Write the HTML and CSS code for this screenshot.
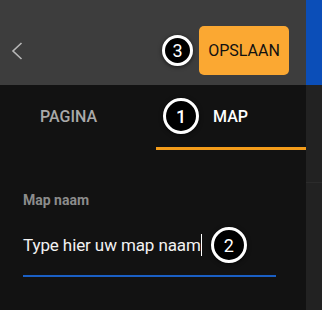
FILE: index.html
```html
<!DOCTYPE html>
<html lang="nl">
<head>
  <meta charset="UTF-8">
  <title>Map opslaan</title>
  <link rel="stylesheet" href="styles.css">
</head>
<body>
<div class="app">
  <div class="main">
    <div class="toolbar">
      <button class="back-button" aria-label="Terug">
        <svg width="12" height="18" viewBox="0 0 12 18">
          <polyline points="10.5,1 2,9 10.5,17" fill="none" stroke="#b8b8b8" stroke-width="1.6"/>
        </svg>
      </button>
      <div class="toolbar-right">
        <span class="step">3</span>
        <button class="save-button">OPSLAAN</button>
      </div>
    </div>

    <div class="tabs">
      <div class="tab tab-page">PAGINA</div>
      <div class="tab tab-map active">
        <span class="step">1</span>
        <span>MAP</span>
      </div>
    </div>

    <div class="form">
      <label class="field-label">Map naam</label>
      <div class="field">
        <span class="field-text">Type hier uw map naam</span><span class="caret"></span>
        <span class="step">2</span>
      </div>
    </div>
  </div>

  <div class="side">
    <div class="side-top"></div>
    <div class="side-mid"></div>
    <div class="side-bottom"></div>
  </div>
</div>
</body>
</html>
```

FILE: styles.css
```css
html, body {
  height: 100%;
  margin: 0;
  background-color: #121212;
  font-family: Roboto, "Liberation Sans", sans-serif;
}

.app {
  display: flex;
  height: 100%;
}

.main {
  width: 306px;
  display: flex;
  flex-direction: column;
  background-color: #121212;
}

/* top bar with back arrow and save button */
.toolbar {
  height: 85px;
  box-sizing: border-box;
  padding: 26px 17px 10px 11px;
  display: flex;
  align-items: center;
  justify-content: space-between;
  background-color: #3d3d3d;
}

.back-button {
  border: none;
  background: none;
  padding: 0;
  width: 12px;
  height: 18px;
  display: flex;
}

.toolbar-right {
  display: flex;
  align-items: center;
  gap: 6px;
}

.save-button {
  width: 90px;
  height: 49px;
  border: none;
  border-radius: 5px;
  background-color: #fba832;
  color: #111;
  font-family: inherit;
  font-size: 16px;
  padding: 0;
}

/* numbered callouts */
.step {
  width: 31px;
  height: 31px;
  box-sizing: border-box;
  border: 3px solid #fff;
  border-radius: 50%;
  background-color: #000;
  color: #fff;
  font-size: 18px;
  display: flex;
  align-items: center;
  justify-content: center;
  box-shadow: 0 1px 4px rgba(0, 0, 0, 0.6);
}

.tabs {
  display: flex;
  height: 65px;
}

.tab {
  box-sizing: border-box;
  height: 65px;
  display: flex;
  align-items: center;
  font-size: 16px;
  font-weight: 500;
  border-bottom: 3px solid transparent;
}

.tab-page {
  width: 156px;
  padding-left: 40px;
  color: #a9a9a9;
}

.tab-map {
  width: 150px;
  padding-left: 7px;
  gap: 14px;
  color: #fff;
}

.tab-map .step {
  width: 36px;
  height: 36px;
}

.tab.active {
  border-bottom-color: #f39c1a;
}

.form {
  padding: 42px 30px 0 23px;
}

.field-label {
  display: block;
  font-size: 14px;
  font-weight: 700;
  line-height: 16px;
  color: #8c8c8c;
}

.field {
  margin-top: 13px;
  height: 56px;
  box-sizing: border-box;
  border-bottom: 2px solid #1a5fc4;
  display: flex;
  align-items: center;
  padding-bottom: 6px;
  color: #f2f2f2;
  font-size: 17px;
  letter-spacing: -0.1px;
}

.caret {
  width: 1px;
  height: 22px;
  background-color: #fff;
}

.field .step {
  width: 36px;
  height: 36px;
  margin-left: 9px;
}

/* strip of the next panel on the right */
.side {
  flex: 1;
  display: flex;
  flex-direction: column;
  background-color: #222;
}

.side-top {
  height: 85px;
  background-color: #0b4eb8;
}

.side-mid {
  height: 97px;
  border-bottom: 1px solid #2b2b2b;
}
```
